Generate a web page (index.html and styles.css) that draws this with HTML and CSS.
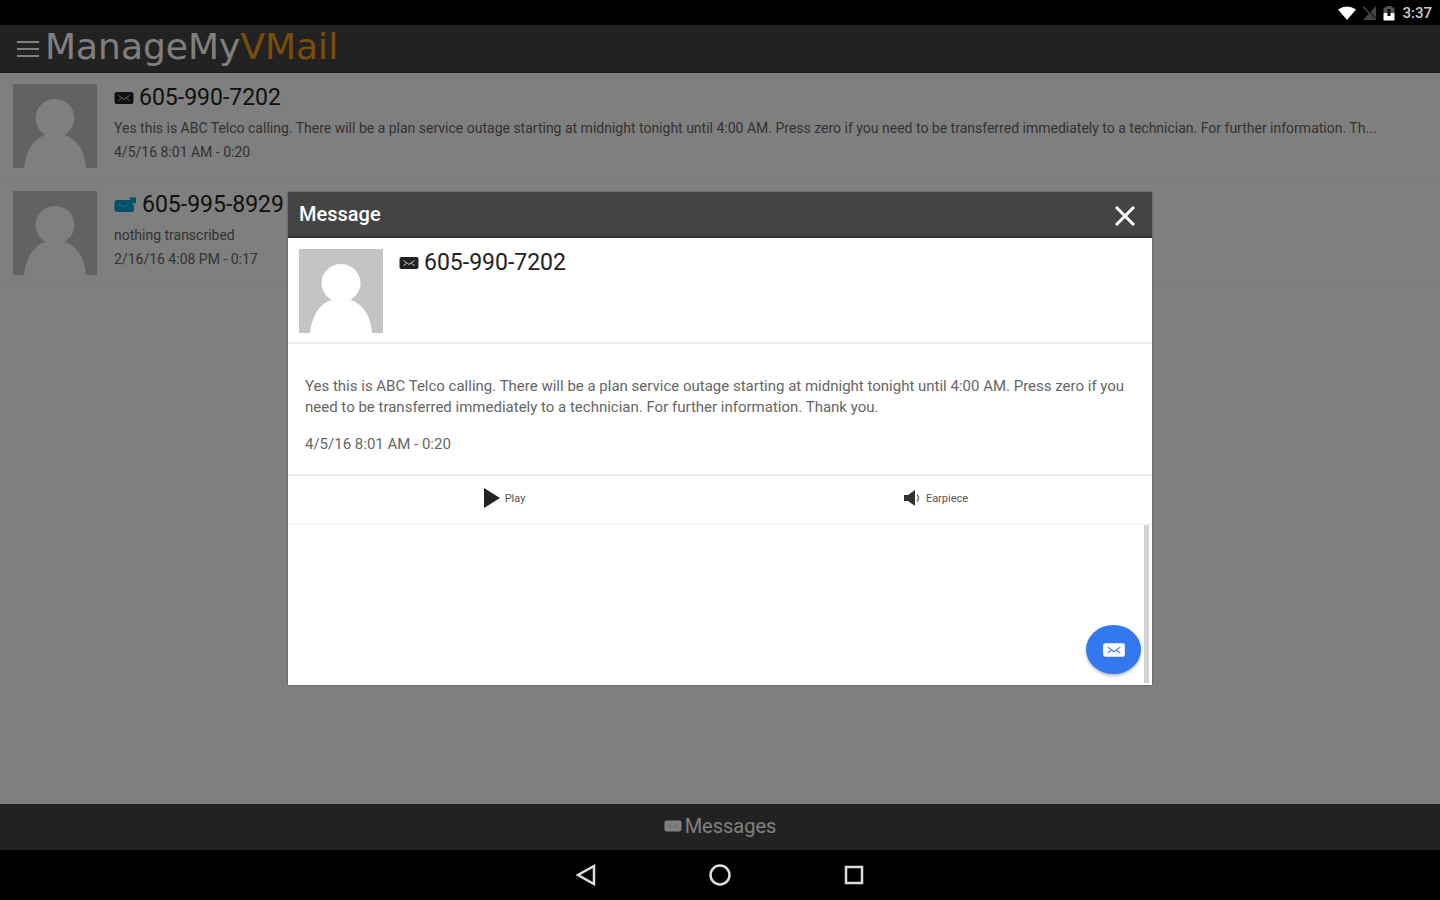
FILE: index.html
```
<!DOCTYPE html>
<html lang="en">
<head>
    <meta charset="UTF-8">
    <meta name="viewport" content="width=device-width, initial-scale=1.0">
    <title>ManageMyVMail</title>
    <link rel="stylesheet" href="styles.css">
</head>
<body>
    <!-- shared icons -->
    <svg class="sprite" aria-hidden="true">
        <symbol id="avatar" viewBox="0 0 84 84">
            <rect width="84" height="84" fill="#c4c4c4"/>
            <ellipse cx="42" cy="34" rx="19.5" ry="19" fill="#fff"/>
            <path d="M11 84C13 67 20 55 33 50.500Q31 49 30 46H54Q53 49 51 50.500C64 55 72 67 73 84Z" fill="#fff"/>
        </symbol>
        <symbol id="mail" viewBox="0 0 20 14">
            <rect x="0.500" y="1" width="19" height="12" rx="2" fill="currentColor"/>
            <path d="M4.500 4.500L10 8.500L15.500 4.500M4.500 9.500L7.500 7.500M15.500 9.500L12.500 7.500" fill="none" stroke="var(--line)" stroke-width="1"/>
        </symbol>
    </svg>

    <div class="status-bar">
        <svg width="18" height="14" viewBox="0 0 18 14"><path d="M0 3.500Q9-2.500 18 3.500L9 14Z" fill="#fff"/></svg>
        <svg width="13" height="14" viewBox="0 0 13 14"><path d="M13 0V14H0Z" fill="#444"/><path d="M1 1L12 13" stroke="#000" stroke-width="2.500"/><path d="M0 0.500L12 13.500" stroke="#4c4c4c" stroke-width="1.200"/></svg>
        <svg width="12" height="15" viewBox="0 0 12 15"><path d="M3.500 0H8.500V1.500H11.500V7H0.500V1.500H3.500Z" fill="#555"/><path d="M0.500 7H11.500V14.500H0.500Z" fill="#fff"/><path d="M6 3V10" stroke="#000" stroke-width="3"/></svg>
        <span class="clock">3:37</span>
    </div>

    <div class="app">
        <header class="header">
            <button class="menu-button" aria-label="Menu">
                <svg width="22" height="18" viewBox="0 0 22 18"><path d="M0 2H22M0 9H22M0 16H22" stroke="#fff" stroke-width="2"/></svg>
            </button>
            <h1 class="logo">ManageMy<span>VMail</span></h1>
        </header>

        <ul class="message-list">
            <li class="message">
                <svg class="avatar"><use href="#avatar"/></svg>
                <div class="message-body">
                    <h2 class="number"><svg class="mail"><use href="#mail"/></svg>605-990-7202</h2>
                    <p>Yes this is ABC Telco calling. There will be a plan service outage starting at midnight tonight until 4:00 AM. Press zero if you need to be transferred immediately to a technician. For further information. Th...</p>
                    <p>4/5/16 8:01 AM - 0:20</p>
                </div>
            </li>
            <li class="message">
                <svg class="avatar"><use href="#avatar"/></svg>
                <div class="message-body">
                    <h2 class="number"><svg class="mail-new" viewBox="0 0 23 18"><path d="M3 4H14Q14.500 8 19 8.500H20V14Q20 16 18 16H3Q0.500 16 0.500 14V6Q0.500 4 3 4Z" fill="currentColor"/><path d="M13 4H18V10H13Z" fill="currentColor"/><path d="M5 8L10 11L14 9" fill="none" stroke="#7fc8e0" stroke-width="1"/><path d="M15 1.500H22V8L20 6.500L17 9L14.500 6.500L17 4Z" fill="currentColor"/></svg>605-995-8929</h2>
                    <p>nothing transcribed</p>
                    <p>2/16/16 4:08 PM - 0:17</p>
                </div>
            </li>
        </ul>

        <footer class="tabs">
            <a class="tab" href="#messages"><svg class="mail"><use href="#mail"/></svg>Messages</a>
        </footer>

        <div class="backdrop">
            <section class="modal" role="dialog" aria-labelledby="modal-title">
                <div class="modal-header">
                    <h2 id="modal-title">Message</h2>
                    <button class="close-button" aria-label="Close">
                        <svg width="20" height="20" viewBox="0 0 20 20"><path d="M1 1L19 19M19 1L1 19" stroke="#fff" stroke-width="3"/></svg>
                    </button>
                </div>
                <div class="contact">
                    <svg class="avatar"><use href="#avatar"/></svg>
                    <h3 class="number"><svg class="mail"><use href="#mail"/></svg>605-990-7202</h3>
                </div>
                <div class="transcript">
                    <p>Yes this is ABC Telco calling. There will be a plan service outage starting at midnight tonight until 4:00 AM. Press zero if you need to be transferred immediately to a technician. For further information. Thank you.</p>
                    <p>4/5/16 8:01 AM - 0:20</p>
                </div>
                <div class="actions">
                    <button><svg width="17" height="20" viewBox="0 0 17 20"><path d="M1 0L17 10L1 20Z" fill="#222"/></svg>Play</button>
                    <button><svg width="17" height="16" viewBox="0 0 17 16"><path d="M0 5H4L11 0V16L4 11H0Z" fill="#333"/><path d="M13 4.500Q16 8 13 11.500" fill="none" stroke="#777" stroke-width="1.500"/></svg>Earpiece</button>
                </div>
                <div class="scroll-area"></div>
                <button class="fab" aria-label="Send message"><svg class="mail"><use href="#mail"/></svg></button>
            </section>
        </div>
    </div>

    <nav class="nav-bar">
        <button aria-label="Back"><svg width="22" height="22" viewBox="0 0 22 22"><path d="M19 2V20L3 11Z"/></svg></button>
        <button aria-label="Home"><svg width="22" height="22" viewBox="0 0 22 22"><circle cx="11" cy="11" r="9.500"/></svg></button>
        <button aria-label="Recent apps"><svg width="22" height="22" viewBox="0 0 22 22"><rect x="3" y="3" width="16" height="16"/></svg></button>
    </nav>
</body>
</html>
```
FILE: styles.css
```
* {
    box-sizing: border-box;
}
body {
    margin: 0;
    height: 100vh;
    display: flex;
    flex-direction: column;
    background: #000;
    font-family: Roboto, sans-serif;
}
h1, h2, h3, p, ul {
    margin: 0;
    padding: 0;
    font-weight: normal;
}
button {
    border: 0;
    padding: 0;
    background: none;
    font-family: inherit;
    display: flex;
    align-items: center;
    justify-content: center;
}
svg {
    flex: none;
}
.sprite {
    position: absolute;
    width: 0;
    height: 0;
}

/* Android status bar */
.status-bar {
    height: 25px;
    flex: none;
    display: flex;
    align-items: center;
    justify-content: flex-end;
    gap: 7px;
    padding: 1px 8px 0 0;
}
.clock {
    color: #ccc;
    font-size: 15px;
    font-weight: 500;
}

.app {
    flex: 1;
    position: relative;
    display: flex;
    flex-direction: column;
    background: #fff;
}
.header {
    height: 48px;
    flex: none;
    display: flex;
    align-items: center;
    padding: 0 17px;
    gap: 6px;
    background: #444;
    border-bottom: 1px solid #333;
}
.logo {
    color: #fff;
    font-family: "DejaVu Sans", sans-serif;
    font-size: 36px;
    line-height: 38px;
    padding-bottom: 4px;
}
.logo span {
    color: #f39c12;
}

.message-list {
    flex: 1;
    list-style-type: none;
}
.message {
    display: flex;
    gap: 17px;
    height: 107px;
    padding: 11px 3px 0 13px;
    border-bottom: 1px solid #f4f4f4;
}
.avatar {
    width: 84px;
    height: 84px;
}
.message-body {
    min-width: 0;
}
.number {
    display: flex;
    align-items: center;
    gap: 5px;
    color: #222;
    font-size: 23px;
    line-height: 28px;
}
.mail {
    --line: #ccc;
    width: 20px;
    height: 14px;
}
.mail-new {
    width: 23px;
    height: 18px;
    color: #00a4d4;
}
.message p {
    color: #666;
    font-size: 14px;
    line-height: 24px;
    white-space: nowrap;
    overflow: hidden;
    text-overflow: ellipsis;
}
.message .number {
    margin-bottom: 4px;
}

.tabs {
    height: 46px;
    flex: none;
    display: flex;
    align-items: center;
    justify-content: center;
    padding-bottom: 2px;
    background: #444;
}
.tab {
    --line: #777;
    display: flex;
    align-items: center;
    gap: 3px;
    color: #fff;
    font-size: 20px;
    text-decoration: none;
}
.tab .mail {
    width: 18px;
}

.backdrop {
    position: absolute;
    inset: 0;
    display: flex;
    align-items: center;
    justify-content: center;
    padding-top: 2px;
    background: rgba(0, 0, 0, 0.5);
}
.modal {
    position: relative;
    display: flex;
    flex-direction: column;
    width: 60%;
    height: 60%;
    background: #fff;
    box-shadow: 0 0 2px rgba(0, 0, 0, 0.4);
}
.modal-header {
    height: 46px;
    flex: none;
    display: flex;
    align-items: center;
    justify-content: space-between;
    padding: 0 17px 0 11px;
    background: #444;
    border-bottom: 2px solid #333;
}
.modal-header h2 {
    color: #fff;
    font-size: 20px;
    font-weight: 500;
}
.close-button {
    padding-top: 4px;
}
.contact {
    display: flex;
    align-items: flex-start;
    gap: 16px;
    height: 106px;
    padding: 11px;
    border-bottom: 2px solid #eee;
}
.transcript {
    height: 132px;
    padding: 32px 17px 0;
    color: #666;
    font-size: 15px;
    line-height: 21px;
    border-bottom: 2px solid #eee;
}
.transcript p {
    margin-bottom: 16px;
}
.actions {
    display: grid;
    grid-template-columns: 1fr 1fr;
    height: 49px;
    padding-bottom: 2px;
    border-bottom: 2px solid #f6f6f6;
}
.actions button {
    gap: 5px;
    color: #555;
    font-size: 11px;
}
.scroll-area {
    flex: 1;
    margin: 0 3px 2px 0;
    border-right: 5px solid #d2d2d2;
}
.fab {
    position: absolute;
    right: 11px;
    bottom: 11px;
    width: 55px;
    height: 49px;
    border-radius: 50%;
    color: #fff;
    background: #3478f0;
    box-shadow: 0 2px 3px rgba(0, 0, 0, 0.25);
}
.fab .mail {
    --line: #3478f0;
    width: 24px;
    height: 16px;
}

/* Android navigation buttons */
.nav-bar {
    height: 50px;
    flex: none;
    display: flex;
    align-items: center;
    justify-content: center;
    gap: 112px;
}
.nav-bar svg {
    fill: none;
    stroke: #ddd;
    stroke-width: 2.5;
}
```
